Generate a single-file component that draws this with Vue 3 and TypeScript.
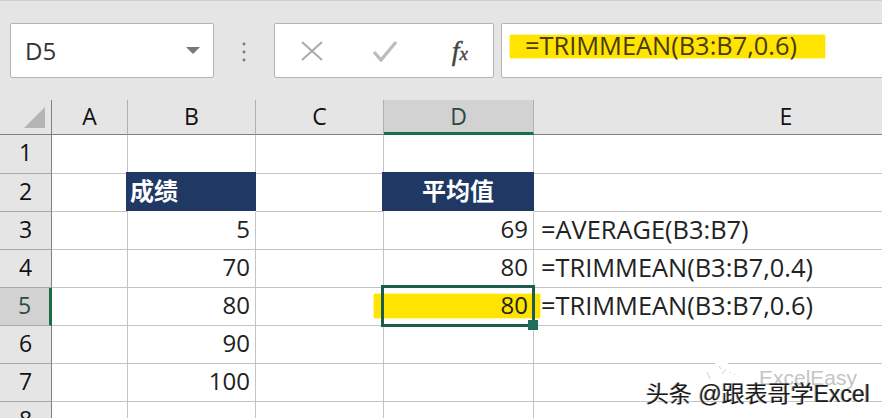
<script setup lang="ts">
interface Cell { text: string; kind?: string }
const columns = ['A', 'B', 'C', 'D', 'E']
const rows: Record<string, Cell>[] = [
  {},
  { B: { text: '成绩', kind: 'head' }, D: { text: '平均值', kind: 'head center' } },
  { B: { text: '5', kind: 'num' }, D: { text: '69', kind: 'num' }, E: { text: '=AVERAGE(B3:B7)' } },
  { B: { text: '70', kind: 'num' }, D: { text: '80', kind: 'num' }, E: { text: '=TRIMMEAN(B3:B7,0.4)' } },
  { B: { text: '80', kind: 'num' }, D: { text: '80', kind: 'num' }, E: { text: '=TRIMMEAN(B3:B7,0.6)' } },
  { B: { text: '90', kind: 'num' } },
  { B: { text: '100', kind: 'num' } },
  {},
]
</script>

<template>
  <div class="app">
    <div class="bar">
      <div class="box name">
        <span>D5</span>
        <svg width="14" height="8" viewBox="0 0 14 8"><path d="M0 0H14L7 7Z" fill="#77787a" /></svg>
      </div>
      <svg class="dots" width="4" height="20" viewBox="0 0 4 20">
        <circle cx="2" cy="2" r="1.4" fill="#77787a" /><circle cx="2" cy="10" r="1.4" fill="#77787a" /><circle cx="2" cy="18" r="1.4" fill="#77787a" />
      </svg>
      <div class="box actions">
        <svg width="22" height="20" viewBox="0 0 22 20"><path d="M1 1L21 19M21 1L1 19" stroke="#a9aaad" stroke-width="2" fill="none" /></svg>
        <svg class="check" width="26" height="22" viewBox="0 0 26 22"><path d="M2 12L9 20L24 2" stroke="#bcbdc0" stroke-width="3.4" fill="none" /></svg>
        <span class="fx"><i>f</i><i class="x">x</i></span>
      </div>
      <div class="box formula"><span class="mark">=TRIMMEAN(B3:B7,0.6)</span></div>
    </div>

    <div class="sheet">
      <div class="corner"><svg width="21" height="21" viewBox="0 0 21 21"><path d="M21 0V21H0Z" fill="#b5b5b5" /></svg></div>
      <div v-for="c in columns" :key="c" class="colhead" :class="{ active: c === 'D' }">{{ c }}</div>
      <template v-for="(row, i) in rows" :key="i">
        <div class="rowhead" :class="{ active: i === 4 }">{{ i + 1 }}</div>
        <div v-for="c in columns" :key="c" class="cell" :class="[row[c]?.kind, c === 'E' ? 'wide' : '']">
          <span v-if="row[c]">{{ row[c].text }}</span>
        </div>
      </template>
      <div class="cellmark"></div>
      <div class="selection"><i class="handle"></i></div>
    </div>

    <svg class="logo" width="44" height="34" viewBox="0 0 44 34">
      <rect x="15" y="1" width="13" height="4" fill="#fff" />
      <path d="M7 12L10 19M19 6L21 9M26 9L22 14M30 12L31 13M34 14L35 15" stroke="#d0d0d0" stroke-width="1" fill="none" />
    </svg>
    <div class="wm1">ExcelEasy</div>
    <div class="wm2">头条 @跟表哥学Excel</div>
  </div>
</template>

<style>
html, body { margin: 0; background: #fff; }
</style>

<style scoped>
.app {
  position: relative;
  width: 882px;
  height: 418px;
  overflow: hidden;
  background: #fff;
  font-family: "Open Sans", "Noto Sans CJK SC", sans-serif;
  color: #222;
}
.bar {
  box-sizing: border-box;
  height: 100px;
  padding: 22px 0 0 10px;
  display: flex;
  align-items: flex-start;
  background: #e6e5e6;
  border-top: 1px solid #cfcfcf;
}
.box {
  box-sizing: border-box;
  height: 55px;
  background: #fff;
  border: 1px solid #b4b4b6;
  border-radius: 2px;
  display: flex;
  align-items: center;
}
.name {
  width: 204px;
  padding: 0 13px 0 14px;
  justify-content: space-between;
  font-size: 24px;
  color: #333;
}
.dots { margin: 19px 28px 0 28px; }
.actions {
  width: 220px;
  padding: 0 25px 0 26px;
}
.check { margin-left: 49px; }
.fx {
  margin-left: auto;
  font-family: "Liberation Serif", serif;
  font-size: 28px;
  color: #444;
  line-height: 1;
  -webkit-text-stroke: 0.4px #444;
}
.fx .x { font-size: 19px; }
.formula {
  flex: 1;
  margin-left: 7px;
  margin-right: -4px;
  padding-left: 8px;
  font-size: 25.4px;
}
.mark {
  box-sizing: border-box;
  width: 315px;
  height: 23px;
  line-height: 21px;
  padding-left: 15px;
  background: #ffe400;
  box-shadow: 0 0 2px #ffe400;
  color: #4a3a10;
  white-space: nowrap;
  margin-top: -9px;
}
.sheet {
  position: relative;
  display: grid;
  grid-template-columns: 52px 76px 128px 128px 150px 505px;
  grid-template-rows: 35px 39px repeat(7, 38px);
}
.corner {
  background: #e6e5e6;
  border-right: 1px solid #808080;
  border-bottom: 1px solid #808080;
  box-sizing: border-box;
  display: flex;
  align-items: flex-end;
  justify-content: flex-end;
  padding: 0 6px 6px 0;
}
.colhead {
  box-sizing: border-box;
  background: #e6e5e6;
  border-right: 1px solid #b0b0b0;
  border-bottom: 1px solid #808080;
  text-align: center;
  font-size: 23px;
  line-height: 32px;
  color: #111;
}
.colhead:last-of-type { border-right: 0; }
.colhead.active {
  background: #d2d2d2;
  border-bottom: 3px solid #1a6d45;
  color: #2d4a44;
}
.rowhead {
  box-sizing: border-box;
  background: #e6e5e6;
  border-right: 1px solid #808080;
  border-bottom: 1px solid #aaa;
  text-align: center;
  font-size: 23px;
  line-height: 35px;
  color: #111;
}
.rowhead.active {
  background: #d2d2d2;
  border-right: 3px solid #1a6d45;
  color: #2d4a44;
}
.cell {
  box-sizing: border-box;
  border-right: 1px solid #c4c4c4;
  border-bottom: 1px solid #c4c4c4;
  font-size: 24px;
  line-height: 34px;
  padding-left: 7px;
  white-space: nowrap;
  position: relative;
  z-index: 2;
}
.cell.wide { border-right: 0; font-size: 25.4px; }
.cell.num { text-align: right; padding: 0 5px 0 0; }
.cell.head {
  background: #1f3864;
  color: #fff;
  font-weight: 700;
  font-size: 24px;
  padding-left: 4px;
  margin: -2px 0 1px -2px;
  line-height: 37px;
  border: 0;
}
.cell.center { text-align: center; padding-left: 0; }
.cellmark {
  position: absolute;
  left: 374px;
  top: 194px;
  width: 166px;
  height: 24px;
  background: #ffe400;
  box-shadow: 0 0 2px #ffe400;
  z-index: 1;
}
.selection {
  position: absolute;
  left: 381px;
  top: 185px;
  width: 154px;
  height: 42px;
  box-sizing: border-box;
  border: 3px solid #1d5c4c;
  z-index: 3;
}
.handle {
  position: absolute;
  right: -6px;
  bottom: -6px;
  width: 10px;
  height: 10px;
  background: #1d6f5c;
}
.logo {
  position: absolute;
  left: 700px;
  top: 360px;
  z-index: 4;
}
.wm1, .wm2 {
  position: absolute;
  z-index: 5;
  white-space: nowrap;
  font-family: "Liberation Sans", "Noto Sans CJK SC", sans-serif;
}
.wm1 { left: 759px; top: 366px; font-size: 21px; color: #c4c4c4; }
.wm2 {
  left: 646px;
  top: 375px;
  font-size: 23px;
  color: #1c1c1c;
  text-shadow: 1px 1px 0 #fff, -1px 0 0 #aaa;
}
</style>
